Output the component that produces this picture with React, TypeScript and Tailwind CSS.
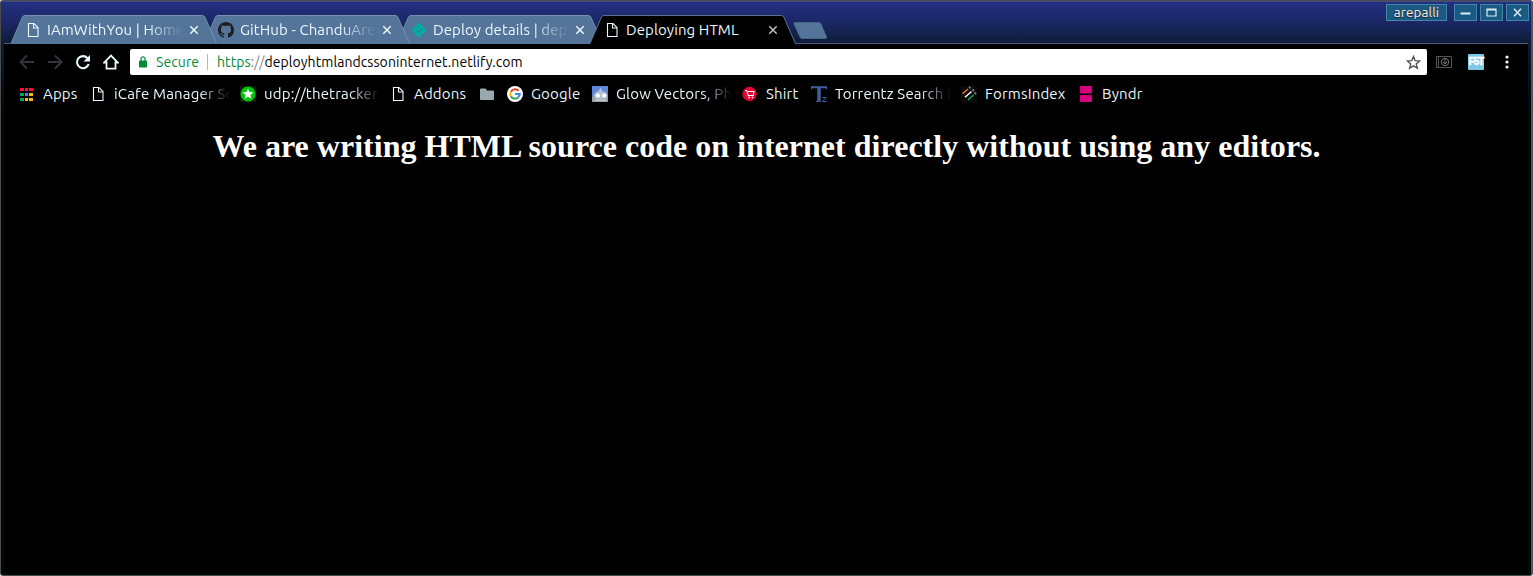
import type { ReactNode } from "react";

const FADE = "[mask-image:linear-gradient(to_right,black_74%,transparent_100%)]";

function PageIcon() {
  return (
    <svg width="16" height="16" viewBox="0 0 16 16" fill="none" stroke="#eef9fb" strokeWidth="1.1">
      <path d="M3.500 1.500h5.500l4 4v9h-9.500z" />
      <path d="M8.500 1.500v4.500h4.500" />
    </svg>
  );
}

function GitHubIcon() {
  return (
    <svg width="16" height="16" viewBox="0 0 16 16" fill="#1b1f23">
      <path d="M8 0C3.58 0 0 3.58 0 8c0 3.54 2.29 6.53 5.47 7.59.4.07.55-.17.55-.38 0-.19-.01-.82-.01-1.49-2.01.37-2.53-.49-2.69-.94-.09-.23-.48-.94-.82-1.13-.28-.15-.68-.52-.01-.53.63-.01 1.08.58 1.23.82.72 1.21 1.87.87 2.33.66.07-.52.28-.87.51-1.07-1.78-.2-3.64-.89-3.64-3.95 0-.87.31-1.59.82-2.15-.08-.2-.36-1.02.08-2.12 0 0 .67-.21 2.2.82.64-.18 1.32-.27 2-.27s1.36.09 2 .27c1.53-1.04 2.2-.82 2.2-.82.44 1.1.16 1.92.08 2.12.51.56.82 1.27.82 2.15 0 3.07-1.87 3.75-3.65 3.95.29.25.54.73.54 1.48 0 1.07-.01 1.93-.01 2.2 0 .21.15.46.55.38A8.01 8.01 0 0 0 16 8c0-4.42-3.58-8-8-8z" />
    </svg>
  );
}

function DeployIcon() {
  return (
    <svg width="16" height="16" viewBox="0 0 16 16">
      <path d="M8 .5 15.500 8 8 15.500.5 8z" fill="#00b0a0" />
      <path d="m5 8.200 2.200 2L11 6.300M6 5.300l1.500-1" fill="none" stroke="#2c7f90" strokeWidth="1.100" />
    </svg>
  );
}

function CloseIcon({ color }: { color: string }) {
  return (
    <svg width="10" height="10" viewBox="0 0 10 10" stroke={color} strokeWidth="1.500">
      <path d="m1.300 1.300 7.400 7.400M8.700 1.300 1.300 8.700" />
    </svg>
  );
}

type TabProps = { icon: ReactNode; title: string; active?: boolean; layer: string };

function Tab({ icon, title, active, layer }: TabProps) {
  return (
    <div className={`relative -mr-[13px] flex h-[29px] w-[206px] shrink-0 items-center pl-[14px] ${layer}`}>
      <svg className="absolute inset-0" width="206" height="29" viewBox="0 0 206 29">
        <path d="M0 29 11.500 2Q12.200.5 14 .5H191Q193 .5 193.800 2L205.500 29z" fill={active ? "#000" : "#54749a"} />
        <path
          d="M0 28.500 11.500 2Q12.200.5 14 .5H191Q193 .5 193.800 2L205.500 28.500"
          fill="none"
          stroke={active ? "#5b7192" : "#7690ad"}
          strokeWidth="1"
        />
      </svg>
      <div className="relative flex items-center">
        {icon}
        <div className={`ml-[6px] w-[136px] overflow-hidden whitespace-nowrap text-[15px] leading-5 tracking-[0.1px] text-[#e9f8fc] ${active ? "" : FADE}`}>
          {title}
        </div>
        <div className="ml-[6px]">
          <CloseIcon color={active ? "#b8c4c8" : "#e9f8fc"} />
        </div>
      </div>
    </div>
  );
}

function WindowButton({ children }: { children: ReactNode }) {
  return (
    <div className="flex h-[17px] w-[23px] items-center justify-center border border-[#4187a6] bg-[#1b5b83]">
      <svg width="15" height="13" viewBox="0 0 15 13" fill="none" stroke="#d9eef5" strokeWidth="1.500">
        {children}
      </svg>
    </div>
  );
}

function AppsIcon() {
  const colors = ["#ff0a30", "#ff0a30", "#ff0a30", "#00a565", "#4285f4", "#f9b800", "#00a565", "#f9b800", "#f9b800"];
  return (
    <div className="grid h-4 w-[15px] grid-cols-[4px_3px_4px] content-center gap-x-px gap-y-[2px]">
      {colors.map((c, i) => (
        <div key={i} className="h-[3px]" style={{ backgroundColor: c }} />
      ))}
    </div>
  );
}

function StarBadge() {
  return (
    <svg width="16" height="16" viewBox="0 0 16 16">
      <rect width="16" height="16" fill="#082008" />
      <circle cx="8" cy="8" r="7.500" fill="#00c40b" />
      <path d="m8 2.400 1.500 3.700 4 .3-3.100 2.500 1 3.900L8 10.700l-3.400 2.100 1-3.900-3.100-2.500 4-.3z" fill="#fff" />
    </svg>
  );
}

function FolderIcon() {
  return (
    <svg width="16" height="16" viewBox="0 0 16 16" fill="#9aa9ad">
      <path d="M1 3.500Q1 2.500 2 2.500H6.500L8 4.500H14Q15 4.500 15 5.500V13Q15 14 14 14H2Q1 14 1 13z" />
    </svg>
  );
}

function GoogleIcon() {
  return (
    <svg width="16" height="16" viewBox="0 0 16 16">
      <circle cx="8" cy="8" r="8" fill="#fff" />
      <g fill="none" strokeWidth="2.200">
        <path d="M3.900 5.700A4.700 4.700 0 0 1 11.600 4.900" stroke="#ea4335" />
        <path d="M3.900 5.700A4.700 4.700 0 0 0 3.900 10.300" stroke="#fbbc05" />
        <path d="M3.900 10.300A4.700 4.700 0 0 0 11.100 11.500" stroke="#34a853" />
        <path d="M11.100 11.500A4.700 4.700 0 0 0 12.700 8H8" stroke="#4285f4" />
      </g>
    </svg>
  );
}

function RobotIcon() {
  return (
    <svg width="16" height="16" viewBox="0 0 16 16">
      <rect width="16" height="16" fill="#5f87d8" />
      <path d="M0 11h16v5H0z" fill="#98a0a8" />
      <path d="m8.500 1 1.500 4H7z" fill="#b4c3e4" />
      <path d="M1.500 10q1-4 5-5h4q4.500 1 5 5l-2 3H4z" fill="#b5bfd2" />
      <circle cx="6" cy="9.500" r="2.100" fill="#fff" />
      <circle cx="12.300" cy="9.500" r="2.100" fill="#fff" />
      <path d="M3 14.300h11" stroke="#c5c9cc" strokeWidth="1.400" />
    </svg>
  );
}

function CartIcon() {
  return (
    <svg width="16" height="16" viewBox="0 0 16 16">
      <circle cx="7.500" cy="8" r="7.200" fill="#e8002f" />
      <path d="M3 4.500h1.700l1.500 5h5l.8-4H6" fill="none" stroke="#fff" strokeWidth="1.100" />
      <circle cx="7" cy="11.400" r=".9" fill="#fff" />
      <circle cx="10.500" cy="11.400" r=".9" fill="#fff" />
    </svg>
  );
}

function TorrentzIcon() {
  return (
    <svg width="16" height="16" viewBox="0 0 16 16" fill="none" stroke="#3f5f9f">
      <path d="M0 1.200h16" strokeWidth="2" />
      <path d="M.5 1v2.500M15.500 1v2.500" />
      <path d="M8 1v14" strokeWidth="3.500" />
      <path d="M5 15.300h5" />
      <path d="M11.200 11.500h4l-4 4h4.500" />
    </svg>
  );
}

function FormsIcon() {
  return (
    <svg width="16" height="16" viewBox="0 0 16 16" fill="none" strokeWidth="1.500">
      <rect width="16" height="16" fill="#0b0b0b" />
      <path d="m1.500 7.800 5.500-4.800" stroke="#f27a1a" />
      <path d="M4 11.300 10.500 5.500" stroke="#fff" />
      <path d="m7 14 5.500-5" stroke="#13a84b" />
      <path d="m8 2.200 1.500-1.300M11.500 4.800l1.500-1.300M13.500 8l1.500-1.300" stroke="#77797e" strokeWidth="2.200" />
    </svg>
  );
}

function ByndrIcon() {
  return (
    <svg width="16" height="16" viewBox="0 0 16 16" fill="#d6007f">
      <path d="M2 0h12v7l-1 .5H3L2 7zM2 9.500 3 9h10l1 .5V16H2z" />
    </svg>
  );
}

type BookmarkProps = { icon: ReactNode; label?: string; size: string; fade?: boolean };

function Bookmark({ icon, label, size, fade }: BookmarkProps) {
  return (
    <div className={`flex shrink-0 items-center gap-2 ${size}`}>
      <div className="shrink-0">{icon}</div>
      {label && (
        <div className={`whitespace-nowrap text-[15px] leading-5 tracking-[0.17px] text-[#e9f8fc] ${fade ? `w-[116px] shrink-0 overflow-hidden ${FADE}` : ""}`}>
          {label}
        </div>
      )}
    </div>
  );
}

export default function App() {
  return (
    <div className="h-[576px] w-[1533px] bg-white font-['Ubuntu','Noto_Sans',sans-serif]">
      <div className="flex h-full flex-col overflow-hidden rounded-[3px] border border-[#4b4b4b] border-r-2 border-r-[#555] bg-linear-to-b from-[#252f82] via-[#0d1c38] via-[43px] to-[#02090b] to-[110px]">
        <header className="flex h-[42px] shrink-0 justify-between border-t border-[#3d4f86] bg-linear-to-b from-[#252f82] via-[#1b2765] to-[#0d1c38] pl-[10px]">
          <div className="flex items-end">
            <Tab icon={<PageIcon />} title="IAmWithYou | Home" layer="z-30 -mb-px" />
            <Tab icon={<GitHubIcon />} title="GitHub - ChanduAre" layer="z-20 -mb-px" />
            <Tab icon={<DeployIcon />} title="Deploy details | dep" layer="z-10 -mb-px" />
            <Tab icon={<PageIcon />} title="Deploying HTML" layer="z-40 -mb-px" active />
            <svg className="mb-[3px] ml-[10px]" width="36" height="18" viewBox="0 0 36 18">
              <path d="M2 .5h24q1.500 0 2 1.500l5.500 13q.5 1.500-1 1.500H9q-1.500 0-2-1.500L1 2Q.5.5 2 .5z" fill="#54749a" stroke="#486585" />
            </svg>
          </div>
          <div className="flex pr-[2px] pt-[2px]">
            <div className="mr-[7px] flex h-[17px] w-[61px] items-center justify-center border border-[#4187a6] bg-[#1b5b83] text-[13.500px] leading-none tracking-[0.1px] text-[#f2f2f2] [text-shadow:0_1px_1px_#222,0_0_2px_#444]">
              arepalli
            </div>
            <div className="flex gap-[3px]">
              <WindowButton>
                <path d="M2.500 7.500h10" strokeWidth="2" />
              </WindowButton>
              <WindowButton>
                <path d="M3 3h9v7H3zM3 4h9" strokeWidth="1.200" />
              </WindowButton>
              <WindowButton>
                <path d="m4 2.800 7 7.500M11 2.800l-7 7.500" />
              </WindowButton>
            </div>
          </div>
        </header>

        <div className="mx-[3px] mb-[3px] flex flex-1 flex-col border-t border-[#515c7a] bg-black">
          <div className="flex h-9 shrink-0 items-center pl-[15px]">
            <div className="flex gap-3">
              <svg width="16" height="16" viewBox="0 0 16 16" fill="none" stroke="#333637" strokeWidth="2">
                <path d="M15 8H2M8 1.500 1.500 8 8 14.500" />
              </svg>
              <svg width="16" height="16" viewBox="0 0 16 16" fill="none" stroke="#333637" strokeWidth="2">
                <path d="M1 8h13M8 1.500 14.500 8 8 14.500" />
              </svg>
              <svg width="16" height="16" viewBox="0 0 16 16">
                <path d="M13.700 10A6 6 0 1 1 12.500 4.200" fill="none" stroke="#e9f8fc" strokeWidth="2.100" />
                <path d="M15 1v6.500H8.500z" fill="#e9f8fc" />
              </svg>
              <svg width="16" height="16" viewBox="0 0 16 16" fill="none" stroke="#e9f8fc" strokeWidth="1.800">
                <path d="M3.500 8.500H1.200L8 1.500l6.800 7h-2.300v6.200h-9z" />
              </svg>
            </div>
            <div className="ml-[11px] flex h-[26px] w-[1297px] items-center rounded-xs bg-white pl-[9px] pr-[6px] text-[14px] leading-5">
              <svg width="8" height="12" viewBox="0 0 8 12">
                <rect y="4.500" width="8" height="7" rx=".8" fill="#028a38" />
                <path d="M2 5V2.800a2 2 0 0 1 4 0V5" fill="none" stroke="#028a38" strokeWidth="1.200" />
              </svg>
              <span className="ml-[9px] w-[43px] whitespace-nowrap tracking-[0.1px] text-[#028a38]">Secure</span>
              <span className="ml-2 h-4 w-px bg-[#b5b5b5]" />
              <span className="ml-[9px] flex-1 whitespace-nowrap tracking-[0.07px] text-black">
                <span className="text-[#028a38]">https</span>
                <span className="text-[#888]">://</span>deployhtmlandcssoninternet.netlify.com
              </span>
              <svg width="15" height="15" viewBox="0 0 15 15" fill="none" stroke="#505050" strokeWidth="1.400">
                <path d="m7.500 1.500 1.700 4.200 4.500.3-3.500 2.900 1.200 4.400-3.900-2.400-3.900 2.400 1.200-4.400L1.300 6l4.500-.3z" />
              </svg>
            </div>
            <svg className="ml-[9px]" width="16" height="12" viewBox="0 0 16 12" fill="none" stroke="#555">
              <path d="M.5.5h15v11H.5zM2.500 1v10" />
              <circle cx="9" cy="6" r="3.700" stroke="#777" />
              <path d="M9 3v5M7 6l2 2 2-2" stroke="#777" />
            </svg>
            <div className="ml-4 flex size-4 items-center justify-center rounded-[1px] bg-[#7fc8e3] pb-px font-['Liberation_Sans',sans-serif] text-[10px] font-bold leading-none tracking-[-1px] text-white [-webkit-text-stroke:0.4px_white]">
              F5T
            </div>
            <svg className="ml-[21px]" width="4" height="14" viewBox="0 0 4 14" fill="#e9f8fc">
              <circle cx="2" cy="2" r="1.600" />
              <circle cx="2" cy="7" r="1.600" />
              <circle cx="2" cy="12" r="1.600" />
            </svg>
          </div>

          <nav className="flex h-7 shrink-0 items-center pl-4">
            <Bookmark icon={<AppsIcon />} label="Apps" size="w-[70px]" />
            <Bookmark icon={<PageIcon />} label="iCafe Manager Se" size="w-[150px]" fade />
            <Bookmark icon={<StarBadge />} label="udp://thetracker" size="w-[150px]" fade />
            <Bookmark icon={<PageIcon />} label="Addons" size="w-[89px]" />
            <Bookmark icon={<FolderIcon />} size="w-[28px]" />
            <Bookmark icon={<GoogleIcon />} label="Google" size="w-[85px]" />
            <Bookmark icon={<RobotIcon />} label="Glow Vectors, Ph" size="w-[150px]" fade />
            <Bookmark icon={<CartIcon />} label="Shirt" size="w-[69px]" />
            <Bookmark icon={<TorrentzIcon />} label="Torrentz Search E" size="w-[150px]" fade />
            <Bookmark icon={<FormsIcon />} label="FormsIndex" size="w-[117px]" />
            <Bookmark icon={<ByndrIcon />} label="Byndr" size="w-[70px]" />
          </nav>

          <main className="flex-1 pl-px pt-5 text-center font-['Liberation_Serif',serif]">
            <h1 className="text-[32px] font-bold leading-9 tracking-[0.02px] text-white">
              We are writing HTML source code on internet directly without using any editors.
            </h1>
          </main>
        </div>
      </div>
    </div>
  );
}
